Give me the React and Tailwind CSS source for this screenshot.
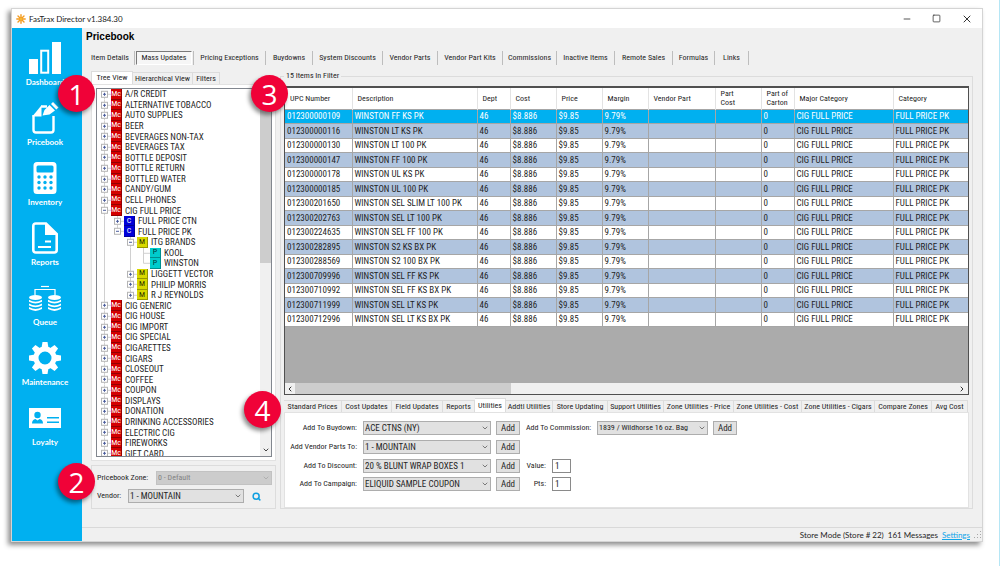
import { useState } from 'react';
import { Minus, Square, X, ChevronDown, ChevronLeft, ChevronRight, Search } from 'lucide-react';
import clsx from 'clsx';

const NAV_ITEMS = [
  { label: 'Dashboard', icon: DashboardIcon },
  { label: 'Pricebook', icon: PricebookIcon },
  { label: 'Inventory', icon: InventoryIcon },
  { label: 'Reports', icon: ReportsIcon },
  { label: 'Queue', icon: QueueIcon },
  { label: 'Maintenance', icon: MaintenanceIcon },
  { label: 'Loyalty', icon: LoyaltyIcon },
];

const SECTIONS = [
  { label: 'Item Details', width: 'w-[49px]' },
  { label: 'Mass Updates', width: 'w-[59px]' },
  { label: 'Pricing Exceptions', width: 'w-[72px]' },
  { label: 'Buydowns', width: 'w-[47px]' },
  { label: 'System Discounts', width: 'w-[70px]' },
  { label: 'Vendor Parts', width: 'w-[55px]' },
  { label: 'Vendor Part Kits', width: 'w-[65px]' },
  { label: 'Commissions', width: 'w-[54px]' },
  { label: 'Inactive Items', width: 'w-[58px]' },
  { label: 'Remote Sales', width: 'w-[58px]' },
  { label: 'Formulas', width: 'w-[42px]' },
  { label: 'Links', width: 'w-[34px]' },
];

const mc = (label, open) => ({ label, kind: 'Mc', depth: 0, open });

const TREE = [
  mc('A/R CREDIT'),
  mc('ALTERNATIVE TOBACCO'),
  mc('AUTO SUPPLIES'),
  mc('BEER'),
  mc('BEVERAGES NON-TAX'),
  mc('BEVERAGES TAX'),
  mc('BOTTLE DEPOSIT'),
  mc('BOTTLE RETURN'),
  mc('BOTTLED WATER'),
  mc('CANDY/GUM'),
  mc('CELL PHONES'),
  mc('CIG FULL PRICE', true),
  { label: 'FULL PRICE CTN', kind: 'C', depth: 1 },
  { label: 'FULL PRICE PK', kind: 'C', depth: 1, open: true, last: true },
  { label: 'ITG BRANDS', kind: 'M', depth: 2, open: true },
  { label: 'KOOL', kind: 'P', depth: 3, leaf: true },
  { label: 'WINSTON', kind: 'P', depth: 3, leaf: true, last: true },
  { label: 'LIGGETT VECTOR', kind: 'M', depth: 2 },
  { label: 'PHILIP MORRIS', kind: 'M', depth: 2 },
  { label: 'R J REYNOLDS', kind: 'M', depth: 2, last: true },
  mc('CIG GENERIC'),
  mc('CIG HOUSE'),
  mc('CIG IMPORT'),
  mc('CIG SPECIAL'),
  mc('CIGARETTES'),
  mc('CIGARS'),
  mc('CLOSEOUT'),
  mc('COFFEE'),
  mc('COUPON'),
  mc('DISPLAYS'),
  mc('DONATION'),
  mc('DRINKING ACCESSORIES'),
  mc('ELECTRIC CIG'),
  mc('FIREWORKS'),
  mc('GIFT CARD'),
];

const KIND_STYLES = {
  Mc: 'bg-[#d40000] text-white',
  C: 'bg-[#0000d8] text-white',
  M: 'bg-[#d8d800] text-[#303000]',
  P: 'bg-[#00cccc] text-[#003838]',
};

const COLUMNS = [
  { label: ['UPC Number'], width: 'w-[67px]' },
  { label: ['Description'], width: 'w-[125px]' },
  { label: ['Dept'], width: 'w-[33px]' },
  { label: ['Cost'], width: 'w-[46px]' },
  { label: ['Price'], width: 'w-[46px]' },
  { label: ['Margin'], width: 'w-[46px]' },
  { label: ['Vendor Part'], width: 'w-[67px]' },
  { label: ['Part', 'Cost'], width: 'w-[46px]' },
  { label: ['Part of', 'Carton'], width: 'w-[33px]' },
  { label: ['Major Category'], width: 'w-[99px]' },
  { label: ['Category'], width: '' },
];

const ITEMS = [
  ['012300000109', 'WINSTON FF KS PK'],
  ['012300000116', 'WINSTON LT KS PK'],
  ['012300000130', 'WINSTON LT 100 PK'],
  ['012300000147', 'WINSTON FF 100 PK'],
  ['012300000178', 'WINSTON UL KS PK'],
  ['012300000185', 'WINSTON UL 100 PK'],
  ['012300201650', 'WINSTON SEL SLIM LT 100 PK'],
  ['012300202763', 'WINSTON SEL LT 100 PK'],
  ['012300224635', 'WINSTON SEL FF 100 PK'],
  ['012300282895', 'WINSTON S2 KS BX PK'],
  ['012300288569', 'WINSTON S2 100 BX PK'],
  ['012300709996', 'WINSTON SEL FF KS PK'],
  ['012300710992', 'WINSTON SEL FF KS BX PK'],
  ['012300711999', 'WINSTON SEL LT KS PK'],
  ['012300712996', 'WINSTON SEL LT KS BX PK'],
];

const UTILITY_TABS = [
  { label: 'Standard Prices', width: 'w-[58px]' },
  { label: 'Cost Updates', width: 'w-[50px]' },
  { label: 'Field Updates', width: 'w-[51px]' },
  { label: 'Reports', width: 'w-[32px]' },
  { label: 'Utilities', width: 'w-[31px]' },
  { label: 'Addtl Utilities', width: 'w-[47px]' },
  { label: 'Store Updating', width: 'w-[55px]' },
  { label: 'Support Utilities', width: 'w-[56px]' },
  { label: 'Zone Utilities - Price', width: 'w-[70px]' },
  { label: 'Zone Utilities - Cost', width: 'w-[68px]' },
  { label: 'Zone Utilities - Cigars', width: 'w-[73px]' },
  { label: 'Compare Zones', width: 'w-[57px]' },
  { label: 'Avg Cost', width: 'w-[36px]' },
];

function DashboardIcon() {
  return (
    <svg width="34" height="34" viewBox="0 0 34 34" fill="#fff">
      <rect x="1" y="18" width="9" height="15" />
      <rect x="13.2" y="9.7" width="7" height="22" fill="none" stroke="#fff" strokeWidth="2" />
      <rect x="24" y="1" width="9" height="32" />
    </svg>
  );
}

function PricebookIcon() {
  return (
    <svg width="34" height="34" viewBox="0 0 34 34" fill="none" stroke="#fff" strokeWidth="2.4">
      <path d="M13 5.500h6M5.500 14v15q0 2.500 2.500 2.500h15q2.500 0 2.500-2.500V15" />
      <path d="M13.500 4.300 4.300 15.500h9.200z" fill="#fff" stroke="none" />
      <path d="M14.500 14.500 16.500 9l5-5 5.500 5.500-5.500 4z" fill="#fff" stroke="none" />
      <path d="m23 3 2-2 5.500 5.500-2.200 2z" fill="#fff" stroke="none" />
    </svg>
  );
}

function InventoryIcon() {
  return (
    <svg width="34" height="34" viewBox="0 0 34 34" fill="#fff">
      <path
        fillRule="evenodd"
        d="M9 1h16q3.500 0 3.500 3.500v25q0 3.500-3.500 3.500H9q-3.500 0-3.500-3.500v-25Q5.500 1 9 1zm1 3.500q-1.500 0-1.500 1.500v4q0 1.500 1.500 1.500h14q1.500 0 1.500-1.500V6q0-1.500-1.500-1.500z"
      />
      {[16, 21.5, 27].map((y) =>
        [11, 17, 23].map((x) => <circle key={`${x}-${y}`} cx={x} cy={y} r="1.7" fill="#00b0f0" />)
      )}
    </svg>
  );
}

function ReportsIcon() {
  return (
    <svg width="34" height="34" viewBox="0 0 34 34" fill="none" stroke="#fff" strokeWidth="2.6">
      <path d="M5.300 5q0-2.500 2.500-2.500H18L28.700 13v16q0 2.500-2.500 2.500H7.800q-2.500 0-2.500-2.500z" />
      <path d="M17 2v12h12z" fill="#fff" stroke="none" />
      <path d="M17 20.500h6M10 26h13" strokeWidth="2" />
    </svg>
  );
}

function QueueIcon() {
  return (
    <svg width="34" height="34" viewBox="0 0 34 34" fill="#fff">
      <path d="M7 14V8.500h20V14" fill="none" stroke="#fff" strokeWidth="1.200" />
      <path d="M13 5.500h8" stroke="#fff" strokeWidth="1.200" />
      {[7.5, 26.5].map((x) => (
        <g key={x}>
          <ellipse cx={x} cy="16.500" rx="6.500" ry="2.500" />
          {[20, 23.7, 27.4].map((y) => (
            <path key={y} d={`M${x - 6.5} ${y - 1.3}q6.500 4 13 0v2q-6.500 3.600-13 0z`} />
          ))}
        </g>
      ))}
    </svg>
  );
}

function MaintenanceIcon() {
  return (
    <svg width="34" height="34" viewBox="0 0 34 34" fill="#fff">
      {[0, 45, 90, 135, 180, 225, 270, 315].map((angle) => (
        <path key={angle} d="M13.500 7 14.500 1h5l1 6z" transform={`rotate(${angle} 17 17)`} />
      ))}
      <circle cx="17" cy="17" r="9" fill="none" stroke="#fff" strokeWidth="5" />
    </svg>
  );
}

function LoyaltyIcon() {
  return (
    <svg width="34" height="34" viewBox="0 0 34 34" fill="#00b0f0">
      <rect x="1" y="7" width="32" height="20" fill="#fff" />
      <circle cx="9.500" cy="14" r="3.200" />
      <path d="M4 22.500q0-4 3.500-4.500l2 1.500 2-1.500q3.500.5 3.500 4.500z" />
      <path d="M19 16h12v1.500H19zM19 20.500h12V22H19z" />
    </svg>
  );
}

function AppIcon() {
  return (
    <svg width="10" height="10" viewBox="0 0 10 10" stroke="#f39a1f" strokeWidth="1.400" strokeLinecap="round">
      <path d="M5 .8v8.400M.8 5h8.400M2 2l6 6M8 2 2 8" />
      <circle cx="5" cy="5" r="1.500" fill="#f7b733" stroke="none" />
    </svg>
  );
}

function SizeGrip() {
  return (
    <svg width="8" height="8" viewBox="0 0 8 8" fill="#a8a8a8">
      <path d="M6 0h1v1H6zM3 3h1v1H3zM6 3h1v1H6zM0 6h1v1H0zM3 6h1v1H3zM6 6h1v1H6z" />
    </svg>
  );
}

// Expander box and connector lines for one tree row
function TreeJoint({ open, leaf, last, first }) {
  return (
    <svg className="h-full w-[13px] shrink-0 overflow-visible" stroke="#d0d0d0" fill="none">
      <line x1="6.5" x2="6.5" y1={first ? '50%' : '0'} y2={last ? '50%' : '100%'} />
      <line x1="6.5" x2="13" y1="50%" y2="50%" />
      {!leaf && (
        <svg y="50%" overflow="visible">
          <rect x="3.500" y="-3" width="6" height="6" fill="#fff" stroke="#b4b4b4" />
          <path d={open ? 'M5 0h3' : 'M5 0h3M6.500-1.500v3'} stroke="#4a5c9c" />
        </svg>
      )}
    </svg>
  );
}

function TreeRow({ node, first }) {
  // no guide under the last open branch
  const guides = Array.from({ length: node.depth }, (_, i) => i !== 1);
  return (
    <li className="flex min-h-0 items-center">
      {guides.map((line, i) => (
        <span key={i} className="flex h-full w-[13px] shrink-0 justify-center">
          {line && <span className="h-full w-px bg-[#d0d0d0]" />}
        </span>
      ))}
      <TreeJoint {...node} first={first} />
      <span
        className={clsx(
          'mr-[3px] flex h-full w-[11px] shrink-0 items-center justify-center border-r border-b border-black/30 text-[8px] leading-none',
          KIND_STYLES[node.kind]
        )}
      >
        {node.kind}
      </span>
      <span className="text-[9px] leading-[10px] whitespace-nowrap">{node.label}</span>
    </li>
  );
}

function Select({ id, value, disabled, className }) {
  return (
    <span className={clsx('relative block shrink-0', className)}>
      <select
        id={id}
        disabled={disabled}
        defaultValue={value}
        className={clsx(
          'block h-[14px] w-full appearance-none border px-px leading-[12px]',
          disabled ? 'border-[#c2c2c2] bg-[#cccccc] text-[#838383]' : 'border-[#adadad] bg-[#e1e1e1]'
        )}
      >
        <option>{value}</option>
      </select>
      <ChevronDown
        size={8}
        className={clsx('pointer-events-none absolute top-[3px] right-[2px]', disabled ? 'text-[#a0a0a0]' : 'text-[#444]')}
      />
    </span>
  );
}

function AddButton({ target }) {
  return (
    <button
      type="button"
      aria-label={`Add ${target}`}
      className="h-[14px] w-6 shrink-0 border border-[#adadad] bg-[#e1e1e1] text-[9px] leading-[12px]"
    >
      Add
    </button>
  );
}

function FieldRow({ id, label, value, className, children }) {
  return (
    <div className={clsx('flex items-center', className)}>
      <label htmlFor={id} className="w-[71px] shrink-0 text-right whitespace-nowrap">
        {label}
      </label>
      <Select id={id} value={value} className="ml-[6px] w-[128px] text-[9px]" />
      <span className="ml-[5px] flex">
        <AddButton target={label} />
      </span>
      {children}
    </div>
  );
}

function NumberField({ id, label }) {
  return (
    <>
      <label htmlFor={id} className="w-[26px] text-right">
        {label}
      </label>
      <input id={id} defaultValue="1" className="ml-[6px] h-[14px] w-[19px] border border-[#8a8a8a] bg-white px-[2px] text-[9px]" />
    </>
  );
}

function StepBadge({ children, className }) {
  return (
    <span
      className={clsx(
        'absolute z-10 flex size-[37px] items-center justify-center rounded-full bg-[#f00238] font-["Open_Sans",sans-serif] text-[28px] leading-none text-white shadow-[-2px_3px_4px_rgba(0,0,0,0.45)]',
        className
      )}
    >
      {children}
    </span>
  );
}

function TitleBar() {
  return (
    <header className="flex h-[19px] items-center bg-white pl-1 font-[Lato,sans-serif] text-[8px]">
      <AppIcon />
      <h1 className="ml-[3px] text-[#222]">FasTrax Director v1.384.30</h1>
      <div className="ml-auto flex gap-[20px] pr-[9px] text-[#333]">
        <button type="button" aria-label="Minimize"><Minus size={10} /></button>
        <button type="button" aria-label="Maximize"><Square size={9} /></button>
        <button type="button" aria-label="Close"><X size={12} /></button>
      </div>
    </header>
  );
}

function Sidebar() {
  return (
    <nav className="flex w-[70px] shrink-0 flex-col gap-[14px] bg-[#00b0f0] pt-[13px] font-[Lato,sans-serif] text-[8px] leading-[10px] font-bold text-white">
      {NAV_ITEMS.map(({ label, icon: Icon }) => (
        <a key={label} href="#" className="flex flex-col items-center gap-[2px] pr-1">
          <Icon />
          {label}
        </a>
      ))}
    </nav>
  );
}

function SectionTabs({ active, onSelect }) {
  return (
    <div className="flex h-[14px] shrink-0">
      {SECTIONS.map(({ label, width }) => (
        <div key={label} className={clsx('flex shrink-0 justify-center border-r border-[#bdbdbd]', width)}>
          <button
            type="button"
            onClick={() => onSelect(label)}
            className={clsx(
              'px-1 whitespace-nowrap',
              label === active && 'border border-t-[#7a7a7a] border-r-white border-b-white border-l-[#7a7a7a] bg-[#f6f6f6]'
            )}
          >
            {label}
          </button>
        </div>
      ))}
    </div>
  );
}

function TreePanel() {
  return (
    <div>
      <div className="flex h-[13px] items-end">
        <button type="button" className="h-[13px] w-[42px] border border-b-0 border-[#dcdcdc] bg-white">Tree View</button>
        <button type="button" className="h-[12px] w-[60px] border border-b-0 border-l-0 border-[#dcdcdc] whitespace-nowrap">Hierarchical View</button>
        <button type="button" className="h-[12px] w-[27px] border border-b-0 border-l-0 border-[#dcdcdc]">Filters</button>
      </div>
      <div className="border border-[#e2e2e2] bg-white p-[3px] pl-[4px]">
        <div className="flex h-[369px] border border-[#82878f]">
          <div className="min-w-0 flex-1 overflow-hidden">
            <ul className="grid h-[370px] auto-rows-fr pl-px">
              {TREE.map((node, i) => (
                <TreeRow key={node.label} node={node} first={i === 0} />
              ))}
            </ul>
          </div>
          <div className="flex w-[11px] flex-col items-center bg-[#f0f0f0]">
            <ChevronDown size={8} className="my-px shrink-0 rotate-180 text-[#444]" />
            <div className="h-[164px] w-full bg-[#cdcdcd]" />
            <ChevronDown size={8} strokeWidth={3} className="mt-auto mb-[2px] text-[#444]" />
          </div>
        </div>
      </div>
      <div className="mt-[4px] flex h-[44px] flex-col justify-center gap-1 border border-[#dcdcdc] pr-[3px] pl-[5px]">
        <div className="flex items-center justify-between">
          <label htmlFor="zone" className="whitespace-nowrap">Pricebook Zone:</label>
          <Select id="zone" value="0 - Default" disabled className="w-[116px]" />
        </div>
        <div className="flex items-center">
          <label htmlFor="vendor" className="w-[31px]">Vendor:</label>
          <Select id="vendor" value="1 - MOUNTAIN" className="w-[116px] text-[9px]" />
          <button type="button" aria-label="Search vendor" className="ml-[8px] text-[#0f9fe0]">
            <Search size={9} strokeWidth={4} />
          </button>
        </div>
      </div>
    </div>
  );
}

function ItemTable() {
  return (
    <div className="flex h-[309px] flex-col border border-t-2 border-[#505050] bg-[#ababab]">
      <table className="h-[239px] w-full table-fixed border-collapse bg-white">
        <thead>
          <tr className="h-[21px]">
            {COLUMNS.map(({ label, width }) => (
              <th
                key={label.join(' ')}
                className={clsx('border-r border-[#e3e3e3] p-0 pl-[5px] text-left leading-[9px] font-normal whitespace-nowrap last:border-r-0', width)}
              >
                {label.map((line) => (
                  <span key={line} className="block">{line}</span>
                ))}
              </th>
            ))}
          </tr>
        </thead>
        <tbody className="text-[9px]">
          {ITEMS.map(([upc, description], i) => (
            <tr
              key={upc}
              className={clsx(
                '*:border *:border-l-0 *:border-[#a6a6a6] *:p-0 *:pl-[2px] *:leading-[10px] *:whitespace-nowrap *:last:border-r-0',
                i === 0 ? 'bg-[#00b0f0] text-white' : i % 2 === 1 && 'bg-[#b0c4de]'
              )}
            >
              <td>{upc}</td>
              <td>{description}</td>
              <td>46</td>
              <td>$8.886</td>
              <td>$9.85</td>
              <td>9.79%</td>
              <td />
              <td />
              <td>0</td>
              <td>CIG FULL PRICE</td>
              <td>FULL PRICE PK</td>
            </tr>
          ))}
        </tbody>
      </table>
      <div className="mt-auto flex h-[11px] items-center bg-[#f0f0f0] text-[#333]">
        <ChevronLeft size={8} strokeWidth={3} className="mx-px" />
        <div className="h-full w-[216px] bg-[#cdcdcd]" />
        <ChevronRight size={8} strokeWidth={3} className="mr-[2px] ml-auto" />
      </div>
    </div>
  );
}

function UtilityPanel() {
  const [active, setActive] = useState('Utilities');

  return (
    <div className="mt-[3px]">
      <div className="flex h-[14px] items-end">
        {UTILITY_TABS.map(({ label, width }) => (
          <button
            key={label}
            type="button"
            onClick={() => setActive(label)}
            className={clsx(
              'shrink-0 border border-b-0 border-l-0 border-[#dcdcdc] whitespace-nowrap',
              width,
              label === active ? 'h-[14px] bg-white' : 'h-[12px]'
            )}
          >
            {label}
          </button>
        ))}
      </div>
      <div className="h-[96px] border border-[#e2e2e2] bg-white pt-[8px] pl-px">
        <FieldRow id="buydown" label="Add To Buydown:" value="ACE CTNS (NY)" className="mb-[5px]">
          <label htmlFor="commission" className="ml-[6px] w-[65px] whitespace-nowrap">Add To Commission:</label>
          <Select id="commission" value="1839 / Wildhorse 16 oz. Bag" className="ml-[6px] w-[111px]" />
          <span className="ml-[5px] flex">
            <AddButton target="To Commission" />
          </span>
        </FieldRow>
        <FieldRow id="parts" label="Add Vendor Parts To:" value="1 - MOUNTAIN" className="mb-[5px]" />
        <FieldRow id="discount" label="Add To Discount:" value="20 % BLUNT WRAP BOXES 1" className="mb-[4px]">
          <NumberField id="value" label="Value:" />
        </FieldRow>
        <FieldRow id="campaign" label="Add To Campaign:" value="ELIQUID SAMPLE COUPON">
          <NumberField id="pts" label="Pts:" />
        </FieldRow>
      </div>
    </div>
  );
}

const App = () => {
  const [section, setSection] = useState('Mass Updates');

  return (
    <div className="border-r border-[#b5e6f5] pt-2 pr-4 pb-[24px] pl-[11px] font-['Roboto_Condensed',Roboto,sans-serif] text-[8px] leading-[10px] text-[#1f1f1f]">
      <div className="relative border border-[#d4d4d4] bg-[#f0f0f0] shadow-[-3px_3px_5px_rgba(0,0,0,0.45)]">
        <TitleBar />
        <div className="flex">
          <Sidebar />
          <div className="flex min-w-0 flex-1 flex-col">
            <main className="pr-[9px] pb-[18px] pl-[4px]">
              <h2 className="pt-[2px] pb-[7px] font-['Liberation_Sans',sans-serif] text-[10px] leading-[14px] font-bold text-black">
                Pricebook
              </h2>
              <SectionTabs active={section} onSelect={setSection} />
              <div className="flex gap-[4px] pt-[6px] pl-[5px]">
                <div className="w-[185px] shrink-0">
                  <TreePanel />
                </div>
                <fieldset className="min-w-0 flex-1 border border-[#dcdcdc] px-[3px]">
                  <legend className="px-[2px] leading-[10px]">15 Items In Filter</legend>
                  <div className="pt-[5px]">
                    <ItemTable />
                    <UtilityPanel />
                  </div>
                </fieldset>
              </div>
            </main>
            <footer className="flex h-[14px] items-center justify-end gap-1 border-t border-[#d9d9d9] font-[Lato,sans-serif] text-[8px]">
              <span>Store Mode (Store # 22)</span>
              <span>161 Messages</span>
              <a href="#" className="text-[#12a5e8] underline">Settings</a>
              <SizeGrip />
            </footer>
          </div>
        </div>
        <StepBadge className="top-[66px] left-[46px]">1</StepBadge>
        <StepBadge className="top-[454px] left-[46px]">2</StepBadge>
        <StepBadge className="top-[66px] left-[239px]">3</StepBadge>
        <StepBadge className="top-[382px] left-[232px]">4</StepBadge>
      </div>
    </div>
  );
};

export default App;
